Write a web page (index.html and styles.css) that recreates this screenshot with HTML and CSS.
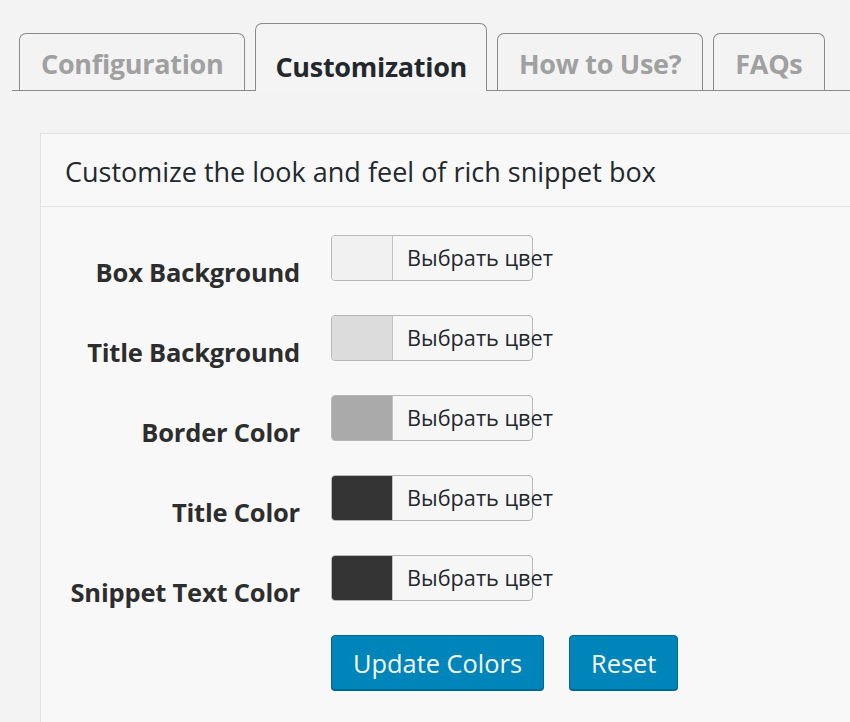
FILE: index.html
```html
<!DOCTYPE html>
<html lang="en">
<head>
<meta charset="utf-8">
<title>Customization</title>
<link rel="stylesheet" href="styles.css">
</head>
<body>
<div class="wrap">
  <nav class="tabs">
    <a class="tab">Configuration</a>
    <a class="tab active">Customization</a>
    <a class="tab">How to Use?</a>
    <a class="tab">FAQs</a>
  </nav>
  <section class="panel">
    <h2 class="panel-title">Customize the look and feel of rich snippet box</h2>
    <div class="form">
      <div class="label">Box Background</div>
      <div class="control"><button class="picker"><span class="swatch sw-box"></span><span class="picker-text">Выбрать цвет</span></button></div>
      <div class="label">Title Background</div>
      <div class="control"><button class="picker"><span class="swatch sw-title-bg"></span><span class="picker-text">Выбрать цвет</span></button></div>
      <div class="label">Border Color</div>
      <div class="control"><button class="picker"><span class="swatch sw-border"></span><span class="picker-text">Выбрать цвет</span></button></div>
      <div class="label">Title Color</div>
      <div class="control"><button class="picker"><span class="swatch sw-dark"></span><span class="picker-text">Выбрать цвет</span></button></div>
      <div class="label">Snippet Text Color</div>
      <div class="control"><button class="picker"><span class="swatch sw-dark"></span><span class="picker-text">Выбрать цвет</span></button></div>
      <div class="label"></div>
      <div class="control actions">
        <button class="primary">Update Colors</button>
        <button class="primary">Reset</button>
      </div>
    </div>
  </section>
</div>
</body>
</html>
```
FILE: styles.css
```css
html, body {
  margin: 0;
  padding: 0;
  background: #f3f3f3;
  font-family: "Open Sans", "Noto Sans", "DejaVu Sans", sans-serif;
  color: #23282d;
  overflow: hidden;
}

.wrap {
  padding-top: 23px;
}

.tabs {
  display: flex;
  align-items: flex-end;
  gap: 10px;
  margin-left: 12px;
  padding-left: 7px;
  border-bottom: 1px solid #8a8a8a;
  height: 67px;
}

.tab {
  display: flex;
  align-items: center;
  justify-content: center;
  box-sizing: border-box;
  height: 57px;
  padding: 2px 21px 0;
  border: 1px solid #8a8a8a;
  border-bottom: none;
  border-radius: 7px 7px 0 0;
  background: #f3f3f3;
  color: #a0a0a0;
  font-size: 27px;
  font-weight: 700;
  letter-spacing: -0.3px;
}

.tab.active {
  height: 68px;
  margin-bottom: -1px;
  color: #23282d;
  background: #f4f4f4;
  padding: 18px 19px 0;
}

.panel {
  margin: 42px 0 0 40px;
  border: 1px solid #e2e2e2;
  border-right: none;
  background: #f8f8f8;
  height: 620px;
}

.panel-title {
  margin: 0;
  height: 73px;
  box-sizing: border-box;
  padding: 22px 0 0 24px;
  border-bottom: 1px solid #e4e4e4;
  font-size: 27px;
  font-weight: 400;
  line-height: 32px;
  color: #23282d;
}

.form {
  display: grid;
  grid-template-columns: 259px auto;
  column-gap: 31px;
  row-gap: 28px;
  padding-top: 28px;
  justify-content: start;
}

.label {
  text-align: right;
  font-size: 25.5px;
  font-weight: 700;
  line-height: 30px;
  padding-top: 22px;
  color: #2d2d2d;
  letter-spacing: -0.2px;
}

.control {
  display: flex;
}

.picker {
  display: flex;
  align-items: center;
  box-sizing: border-box;
  width: 202px;
  height: 46px;
  padding: 0;
  border: 1px solid #b8b8b8;
  border-radius: 4px;
  background: #f6f6f6;
  font-family: inherit;
  cursor: pointer;
  overflow: visible;
}

.swatch {
  flex: 0 0 auto;
  align-self: stretch;
  width: 60px;
  border-right: 1px solid #c4c4c4;
  border-radius: 3px 0 0 3px;
}

.sw-box { background: #f1f1f1; }
.sw-title-bg { background: #dcdcdc; }
.sw-border { background: #aaaaaa; }
.sw-dark { background: #333333; }

.picker-text {
  flex: 0 0 auto;
  padding-left: 14px;
  white-space: nowrap;
  font-size: 21.7px;
  color: #23282d;
  line-height: 30px;
}

.actions {
  gap: 25px;
}

.primary {
  box-sizing: border-box;
  height: 55px;
  padding: 0 21px;
  border: 1px solid #006799;
  border-radius: 4px;
  background: #0085ba;
  box-shadow: 0 1px 0 #006799;
  color: #f4f8fb;
  font-family: inherit;
  font-size: 25.4px;
  font-weight: 400;
  cursor: pointer;
}
```
